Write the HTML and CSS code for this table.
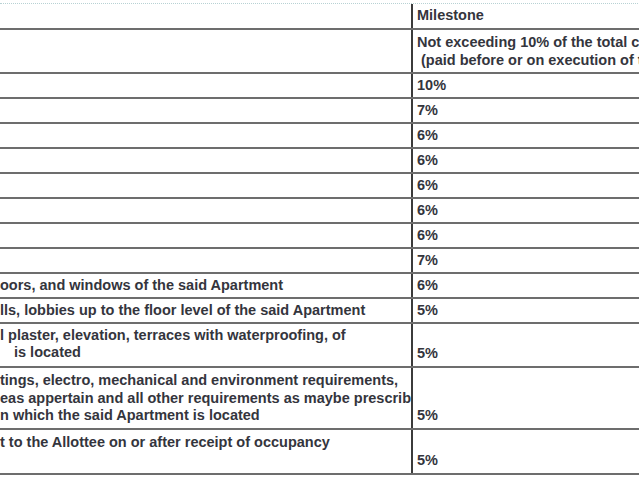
FILE: index.html
```html
<!DOCTYPE html>
<html>
<head>
<meta charset="utf-8">
<link rel="stylesheet" href="styles.css">
</head>
<body>
<div class="sheet">
  <div class="row r-head"><div class="c-left"></div><div class="c-right">Milestone</div></div>
  <div class="row r-two top"><div class="c-left"></div><div class="c-right"><div class="ln">Not exceeding 10% of the total cost of the Apartment</div><div class="ln"> (paid before or on execution of the agreement)</div></div></div>
  <div class="row"><div class="c-left"></div><div class="c-right">10%</div></div>
  <div class="row"><div class="c-left"></div><div class="c-right">7%</div></div>
  <div class="row"><div class="c-left"></div><div class="c-right">6%</div></div>
  <div class="row"><div class="c-left"></div><div class="c-right">6%</div></div>
  <div class="row"><div class="c-left"></div><div class="c-right">6%</div></div>
  <div class="row"><div class="c-left"></div><div class="c-right">6%</div></div>
  <div class="row"><div class="c-left"></div><div class="c-right">6%</div></div>
  <div class="row"><div class="c-left"></div><div class="c-right">7%</div></div>
  <div class="row"><div class="c-left"><div class="ln">oors, and windows of the said Apartment</div></div><div class="c-right">6%</div></div>
  <div class="row"><div class="c-left"><div class="ln">lls, lobbies up to the floor level of the said Apartment</div></div><div class="c-right">5%</div></div>
  <div class="row r-two multi"><div class="c-left"><div class="ln">l plaster, elevation, terraces with waterproofing, of</div><div class="ln indent">is located</div></div><div class="c-right">5%</div></div>
  <div class="row r-three multi"><div class="c-left"><div class="ln">tings, electro, mechanical and environment requirements,</div><div class="ln">eas appertain and all other requirements as maybe prescribed in the</div><div class="ln">n which the said Apartment is located</div></div><div class="c-right">5%</div></div>
  <div class="row r-last multi"><div class="c-left"><div class="ln">t to the Allottee on or after receipt of occupancy</div></div><div class="c-right">5%</div></div>
</div>
</body>
</html>
```

FILE: styles.css
```css
html, body {
  margin: 0;
  padding: 0;
  background: #ffffff;
  overflow: hidden;
}
body {
  font-family: "Liberation Sans", Arial, sans-serif;
  font-weight: bold;
  font-size: 14.5px;
  line-height: 17.5px;
  color: #34353d;
}
.sheet {
  margin-top: 3px;
  width: 900px;
  border-top: 1px dotted #b8d2d4;
}
.row {
  box-sizing: border-box;
  display: grid;
  grid-template-columns: 413px 1fr;
  height: 25px;
  border-bottom: 2px solid #6d6d6d;
  align-items: center;
}
.r-head { height: 26px; }
.r-two { height: 44px; }
.r-three { height: 62px; }
.r-last { height: 45px; }
.c-left {
  box-sizing: border-box;
  height: 100%;
  border-right: 2px solid #3b3b3b;
  overflow: hidden;
  white-space: nowrap;
  display: flex;
  flex-direction: column;
  justify-content: center;
}
.c-right {
  padding-left: 4px;
  white-space: pre;
}
.top .c-right {
  align-self: start;
  padding-top: 4px;
}
.multi .c-left {
  justify-content: flex-start;
  padding-top: 4px;
}
.r-two.multi .c-left {
  padding-top: 2.5px;
}
.multi .c-right {
  align-self: end;
  padding-bottom: 4px;
}
.indent {
  padding-left: 14px;
}
```
